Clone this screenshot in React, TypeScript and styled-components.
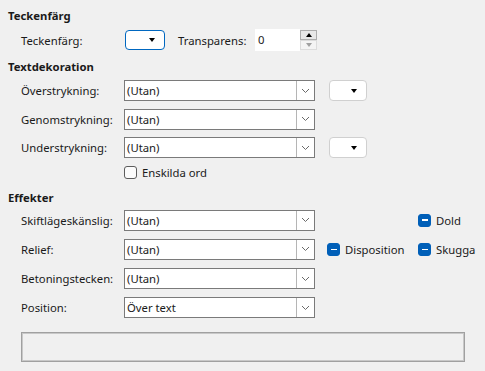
import React from "react";
import styled, { createGlobalStyle } from "styled-components";

const GlobalStyle = createGlobalStyle`
  html, body {
    margin: 0;
    padding: 0;
    background: #f0f0f0;
  }
  body {
    font-family: "Noto Sans", "Open Sans", sans-serif;
    font-size: 11.3px;
    color: #1a1a1a;
  }
`;

const Page = styled.div`
  width: 485px;
  height: 371px;
  box-sizing: border-box;
  padding: 7px 0 0 8px;
  overflow: hidden;
`;

const Heading = styled.div<{ $top?: number }>`
  font-weight: 700;
  height: 18px;
  line-height: 18px;
  margin-top: ${(p) => p.$top ?? 0}px;
`;

const Section = styled.div<{ $gap?: number; $top?: number }>`
  display: flex;
  flex-direction: column;
  gap: ${(p) => p.$gap ?? 8}px;
  padding-left: 13px;
  margin-top: ${(p) => p.$top ?? 6}px;
`;

const Row = styled.div<{ $h?: number }>`
  display: flex;
  align-items: center;
  height: ${(p) => p.$h ?? 21}px;
`;

const Label = styled.span<{ $w?: number }>`
  width: ${(p) => p.$w ?? 103}px;
  flex: none;
  white-space: nowrap;
`;

const ComboBox = styled.div`
  width: 191px;
  height: 21px;
  box-sizing: border-box;
  display: flex;
  background: #fff;
  border: 1px solid #7a7a7a;
`;

const ComboText = styled.span`
  flex: 1;
  padding-left: 2px;
  line-height: 19px;
  white-space: nowrap;
`;

const ComboButton = styled.span`
  width: 18px;
  flex: none;
  box-sizing: border-box;
  border-left: 1px solid #b5b5b5;
  display: flex;
  align-items: center;
  justify-content: center;
`;

const ColorButton = styled.div<{ $focus?: boolean; $w: number; $arrowRight: number }>`
  width: ${(p) => p.$w}px;
  height: ${(p) => (p.$focus ? 20 : 21)}px;
  box-sizing: border-box;
  background: #fff;
  border: 1px solid ${(p) => (p.$focus ? "#0067c0" : "#d0d0d0")};
  border-radius: 4px;
  display: flex;
  align-items: center;
  justify-content: flex-end;
  padding-right: ${(p) => p.$arrowRight}px;
  margin-left: ${(p) => (p.$focus ? 1 : 14)}px;
`;

const Triangle = styled.span<{ $up?: boolean; $color?: string }>`
  width: 0;
  height: 0;
  border-left: 3.5px solid transparent;
  border-right: 3.5px solid transparent;
  ${(p) =>
    p.$up
      ? `border-bottom: 4px solid ${p.$color ?? "#000"};`
      : `border-top: 4px solid ${p.$color ?? "#000"};`}
`;

const SpinLabel = styled.span`
  margin-left: 13px;
  width: 77px;
  white-space: nowrap;
`;

const Spin = styled.div`
  display: flex;
  align-items: center;
  height: 22px;
`;

const SpinField = styled.div`
  width: 45px;
  height: 22px;
  box-sizing: border-box;
  background: #fff;
  padding-left: 3px;
  line-height: 22px;
`;

const SpinButtons = styled.div`
  display: flex;
  flex-direction: column;
  height: 20px;
  width: 17px;
`;

const SpinBtn = styled.div<{ $disabled?: boolean }>`
  flex: 1;
  box-sizing: border-box;
  display: flex;
  align-items: center;
  justify-content: center;
  background: ${(p) => (p.$disabled ? "#f4f4f4" : "#e8e8e8")};
  border: 1px solid ${(p) => (p.$disabled ? "#dcdcdc" : "#adadad")};
`;

const Check = styled.span<{ $mixed?: boolean }>`
  width: 13px;
  height: 13px;
  box-sizing: border-box;
  flex: none;
  border-radius: 3px;
  border: 1px solid ${(p) => (p.$mixed ? "#005fb8" : "#5c5c5c")};
  background: ${(p) => (p.$mixed ? "#005fb8" : "#fbfbfb")};
  display: inline-flex;
  align-items: center;
  justify-content: center;
  margin-right: 5px;
  &::after {
    content: "";
    display: ${(p) => (p.$mixed ? "block" : "none")};
    width: 6px;
    height: 1.5px;
    background: #fff;
  }
`;

const CheckItem = styled.label<{ $w?: number; $ml?: number }>`
  display: inline-flex;
  align-items: center;
  width: ${(p) => (p.$w ? `${p.$w}px` : "auto")};
  margin-left: ${(p) => p.$ml ?? 0}px;
  white-space: nowrap;
`;

const Preview = styled.div`
  width: 444px;
  height: 30px;
  box-sizing: border-box;
  border: 1px solid #a0a0a0;
  box-shadow: inset 0 0 0 1px #c8c8c8;
  margin: 14px 0 0 13px;
`;

const Chevron = () => (
  <svg width="9" height="6" viewBox="0 0 9 6">
    <path d="M1 1 L4.5 4.5 L8 1" fill="none" stroke="#6a6a6a" strokeWidth="1" />
  </svg>
);

const Combo = ({ value }: { value: string }) => (
  <ComboBox>
    <ComboText>{value}</ComboText>
    <ComboButton>
      <Chevron />
    </ComboButton>
  </ComboBox>
);

export default function App() {
  return (
    <Page>
      <GlobalStyle />
      <Heading>Teckenfärg</Heading>
      <Section $top={4}>
        <Row $h={22}>
          <Label>Teckenfärg:</Label>
          <ColorButton $focus $w={40} $arrowRight={9}>
            <Triangle />
          </ColorButton>
          <SpinLabel>Transparens:</SpinLabel>
          <Spin>
            <SpinField>0</SpinField>
            <SpinButtons>
              <SpinBtn>
                <Triangle $up />
              </SpinBtn>
              <SpinBtn $disabled>
                <Triangle $color="#a0a0a0" />
              </SpinBtn>
            </SpinButtons>
          </Spin>
        </Row>
      </Section>

      <Heading $top={7}>Textdekoration</Heading>
      <Section $top={4} $gap={7.5}>
        <Row>
          <Label>Överstrykning:</Label>
          <Combo value="(Utan)" />
          <ColorButton $w={38} $arrowRight={9}>
            <Triangle />
          </ColorButton>
        </Row>
        <Row>
          <Label>Genomstrykning:</Label>
          <Combo value="(Utan)" />
        </Row>
        <Row>
          <Label>Understrykning:</Label>
          <Combo value="(Utan)" />
          <ColorButton $w={38} $arrowRight={9}>
            <Triangle />
          </ColorButton>
        </Row>
        <Row $h={13}>
          <Label />
          <CheckItem>
            <Check />
            Enskilda ord
          </CheckItem>
        </Row>
      </Section>

      <Heading $top={10}>Effekter</Heading>
      <Section $top={3} $gap={8.3}>
        <Row>
          <Label>Skiftlägeskänslig:</Label>
          <Combo value="(Utan)" />
          <CheckItem $ml={103}>
            <Check $mixed />
            Dold
          </CheckItem>
        </Row>
        <Row>
          <Label>Relief:</Label>
          <Combo value="(Utan)" />
          <CheckItem $ml={12} $w={91}>
            <Check $mixed />
            Disposition
          </CheckItem>
          <CheckItem>
            <Check $mixed />
            Skugga
          </CheckItem>
        </Row>
        <Row>
          <Label>Betoningstecken:</Label>
          <Combo value="(Utan)" />
        </Row>
        <Row>
          <Label>Position:</Label>
          <Combo value="Över text" />
        </Row>
      </Section>
      <Preview />
    </Page>
  );
}
